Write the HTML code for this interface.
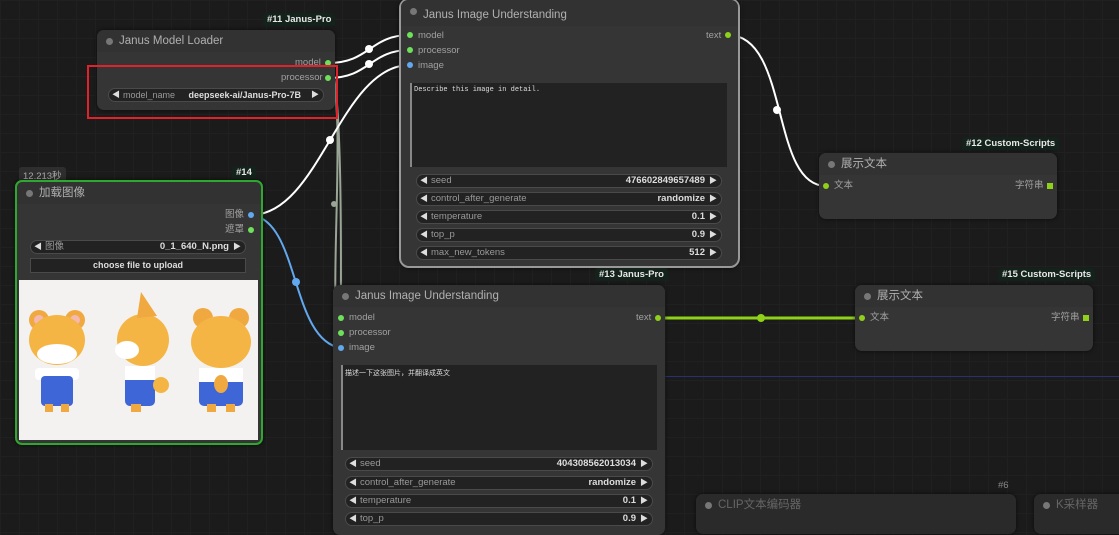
<!DOCTYPE html>
<html><head><meta charset="utf-8"><style>
*{box-sizing:border-box;margin:0;padding:0}
body{width:1119px;height:523px;overflow:hidden;background:#1b1b1b;font-family:"Liberation Sans","Noto Sans CJK SC",sans-serif;position:relative;
background-image:linear-gradient(#202020 1px,transparent 1px),linear-gradient(90deg,#202020 1px,transparent 1px);background-size:19px 19px}
.n{position:absolute;background:#353535;border-radius:7px;box-shadow:0 0 4px rgba(0,0,0,.6)}
.t{position:absolute;left:0;right:0;top:0;height:22px;background:#323232;border-radius:7px 7px 0 0;color:#b0b0b0;font-size:11.5px;line-height:22px;padding-left:22px}
.t:before{content:"";position:absolute;left:9px;top:8px;width:7px;height:7px;border-radius:50%;background:#777}
.b{position:absolute;background:#13221a;color:#e8e8e8;font-size:9.5px;font-weight:bold;padding:1px 4px;border-radius:3px 3px 0 0}
.l{position:absolute;font-size:9.5px;color:#a0a0a0;line-height:12px}
.d{position:absolute;width:6px;height:6px;border-radius:50%}
.g{background:#6ee05a}.bl{background:#62a8ef}.y{background:#8fd11a}
.w{position:absolute;height:14px;background:#222;border:1px solid #4a4a4a;border-radius:8px;font-size:9.5px;color:#999;line-height:12px;padding:0 16px 0 14px}
.w:before{content:"◀";position:absolute;left:3px;color:#ddd;font-size:8px}
.w:after{content:"▶";position:absolute;right:4px;color:#ddd;font-size:8px}
.w span{float:right;color:#ddd;font-weight:bold}
.ta{position:absolute;background:#222;border-left:2px solid #888;font-family:"Liberation Mono","Noto Sans CJK SC",monospace;font-size:7px;color:#ddd;padding:3px 2px}
</style></head><body>
<div style="position:absolute;left:665px;top:376px;width:454px;height:1px;background:#2b3170"></div>
<svg style="position:absolute;left:0;top:0" width="1119" height="523">
<g fill="none" stroke-width="2">
<path d="M328 63 C345 63 340 330 341 318" stroke="#9aa596"/>
<path d="M328 78 C350 78 325 330 341 333" stroke="#9aa596"/>
<path d="M328 63 C370 63 370 35 410 35" stroke="#fff"/>
<path d="M328 78 C370 78 370 50 410 50" stroke="#fff"/>
<path d="M251 215 C320 215 340 65 410 65" stroke="#fff"/>
<path d="M251 215 C300 220 290 340 341 348" stroke="#62a8ef"/>
<path d="M728 35 C790 35 770 186 826 186" stroke="#fff"/>
<path d="M658 318 L862 318" stroke="#8fd11a" stroke-width="3"/>
</g>
<circle cx="369" cy="49" r="4" fill="#fff"/><circle cx="369" cy="64" r="4" fill="#fff"/>
<circle cx="330" cy="140" r="4" fill="#fff"/><circle cx="296" cy="282" r="4" fill="#62a8ef"/>
<circle cx="777" cy="110" r="4" fill="#fff"/><circle cx="761" cy="318" r="4" fill="#8fd11a"/>
<circle cx="334" cy="204" r="3" fill="#9aa596"/>
</svg>

<div class="b" style="left:263px;top:13px">#11 Janus-Pro</div>
<div class="n" style="left:97px;top:30px;width:238px;height:80px"><div class="t">Janus Model Loader</div></div>
<div class="l" style="left:295px;top:57px">model</div><div class="d g" style="left:325px;top:60px"></div>
<div class="l" style="left:281px;top:72px">processor</div><div class="d g" style="left:325px;top:75px"></div>
<div class="w" style="left:108px;top:88px;width:216px;font-size:9px">model_name<span style="margin-right:6px">deepseek-ai/Janus-Pro-7B</span></div>
<div style="position:absolute;left:87px;top:65px;width:251px;height:54px;border:2px solid #e0222a"></div>

<div class="b" style="left:19px;top:167px;background:#2e2e2e;color:#aaa;font-weight:normal">12.213秒</div>
<div class="b" style="left:232px;top:166px">#14</div>
<div class="n" style="left:15px;top:180px;width:248px;height:265px;border:2px solid #2ea82e"><div class="t">加载图像</div></div>
<div class="l" style="left:225px;top:209px">图像</div><div class="d bl" style="left:248px;top:212px"></div>
<div class="l" style="left:225px;top:224px">遮罩</div><div class="d g" style="left:248px;top:227px"></div>
<div class="w" style="left:30px;top:240px;width:216px">图像<span>0_1_640_N.png</span></div>
<div style="position:absolute;left:30px;top:258px;width:216px;height:15px;background:#222;border:1px solid #4a4a4a;color:#ddd;font-size:9px;font-weight:bold;text-align:center;line-height:13px">choose file to upload</div>
<div style="position:absolute;left:19px;top:280px;width:239px;height:160px;background:#f3f2f0">
<svg width="239" height="160">
<g><circle cx="20" cy="40" r="10" fill="#f0a940"/><circle cx="56" cy="40" r="10" fill="#f0a940"/><circle cx="20" cy="40" r="5" fill="#f5b8b0"/><circle cx="56" cy="40" r="5" fill="#f5b8b0"/><ellipse cx="38" cy="60" rx="28" ry="25" fill="#f5b545"/><ellipse cx="38" cy="74" rx="20" ry="10" fill="#fff"/><rect x="16" y="88" width="44" height="12" rx="4" fill="#fff"/><rect x="22" y="96" width="32" height="30" rx="4" fill="#3e66d6"/><rect x="26" y="124" width="8" height="8" fill="#f0a940"/><rect x="42" y="124" width="8" height="8" fill="#f0a940"/></g>
<g><ellipse cx="124" cy="60" rx="26" ry="26" fill="#f5b545"/><path d="M118 38 L122 12 L138 36Z" fill="#f0a940"/><ellipse cx="108" cy="70" rx="12" ry="9" fill="#fff"/><rect x="106" y="86" width="30" height="40" rx="5" fill="#3e66d6"/><rect x="106" y="86" width="30" height="14" fill="#fff"/><rect x="112" y="124" width="10" height="8" fill="#f0a940"/><circle cx="142" cy="105" r="8" fill="#f5b545"/></g>
<g><circle cx="184" cy="38" r="10" fill="#f0a940"/><circle cx="220" cy="38" r="10" fill="#f0a940"/><ellipse cx="202" cy="62" rx="30" ry="26" fill="#f5b545"/><rect x="180" y="88" width="44" height="38" rx="5" fill="#3e66d6"/><rect x="180" y="88" width="44" height="14" fill="#fff"/><ellipse cx="202" cy="104" rx="7" ry="9" fill="#f0a940"/><rect x="188" y="124" width="9" height="8" fill="#f0a940"/><rect x="207" y="124" width="9" height="8" fill="#f0a940"/></g>
</svg></div>

<div class="n" style="left:399px;top:-2px;width:341px;height:270px;border:2px solid #999;border-radius:10px"><div class="t" style="height:26px;line-height:30px">Janus Image Understanding</div></div>
<div class="d g" style="left:407px;top:32px"></div><div class="l" style="left:418px;top:30px">model</div>
<div class="d g" style="left:407px;top:47px"></div><div class="l" style="left:418px;top:45px">processor</div>
<div class="d bl" style="left:407px;top:62px"></div><div class="l" style="left:418px;top:60px">image</div>
<div class="l" style="left:706px;top:30px">text</div><div class="d y" style="left:725px;top:32px"></div>
<div class="ta" style="left:410px;top:83px;width:317px;height:84px">Describe this image in detail.</div>
<div class="w" style="left:416px;top:174px;width:306px">seed<span>476602849657489</span></div>
<div class="w" style="left:416px;top:192px;width:306px">control_after_generate<span>randomize</span></div>
<div class="w" style="left:416px;top:210px;width:306px">temperature<span>0.1</span></div>
<div class="w" style="left:416px;top:228px;width:306px">top_p<span>0.9</span></div>
<div class="w" style="left:416px;top:246px;width:306px">max_new_tokens<span>512</span></div>

<div class="b" style="left:595px;top:268px">#13 Janus-Pro</div>
<div class="n" style="left:333px;top:285px;width:332px;height:250px"><div class="t">Janus Image Understanding</div></div>
<div class="d g" style="left:338px;top:315px"></div><div class="l" style="left:349px;top:312px">model</div>
<div class="d g" style="left:338px;top:330px"></div><div class="l" style="left:349px;top:327px">processor</div>
<div class="d bl" style="left:338px;top:345px"></div><div class="l" style="left:349px;top:342px">image</div>
<div class="l" style="left:636px;top:312px">text</div><div class="d y" style="left:655px;top:315px"></div>
<div class="ta" style="left:341px;top:365px;width:316px;height:85px">描述一下这张图片，并翻译成英文</div>
<div class="w" style="left:345px;top:457px;width:308px">seed<span>404308562013034</span></div>
<div class="w" style="left:345px;top:476px;width:308px">control_after_generate<span>randomize</span></div>
<div class="w" style="left:345px;top:494px;width:308px">temperature<span>0.1</span></div>
<div class="w" style="left:345px;top:512px;width:308px">top_p<span>0.9</span></div>

<div class="b" style="left:962px;top:137px">#12 Custom-Scripts</div>
<div class="n" style="left:819px;top:153px;width:238px;height:66px"><div class="t">展示文本</div></div>
<div class="d y" style="left:823px;top:183px"></div><div class="l" style="left:834px;top:180px">文本</div>
<div class="l" style="left:1015px;top:180px">字符串</div><div style="position:absolute;left:1047px;top:183px;width:6px;height:6px;background:#8fd11a"></div>

<div class="b" style="left:998px;top:268px">#15 Custom-Scripts</div>
<div class="n" style="left:855px;top:285px;width:238px;height:66px"><div class="t">展示文本</div></div>
<div class="d y" style="left:859px;top:315px"></div><div class="l" style="left:870px;top:312px">文本</div>
<div class="l" style="left:1051px;top:312px">字符串</div><div style="position:absolute;left:1083px;top:315px;width:6px;height:6px;background:#8fd11a"></div>

<div class="l" style="left:998px;top:480px;color:#888">#6</div>
<div class="n" style="left:696px;top:494px;width:320px;height:40px;background:#2a2a2a"><div class="t" style="background:#2a2a2a;color:#666">CLIP文本编码器</div></div>
<div class="n" style="left:1034px;top:494px;width:100px;height:40px;background:#2a2a2a"><div class="t" style="background:#2a2a2a;color:#666">K采样器</div></div>
</body></html>
